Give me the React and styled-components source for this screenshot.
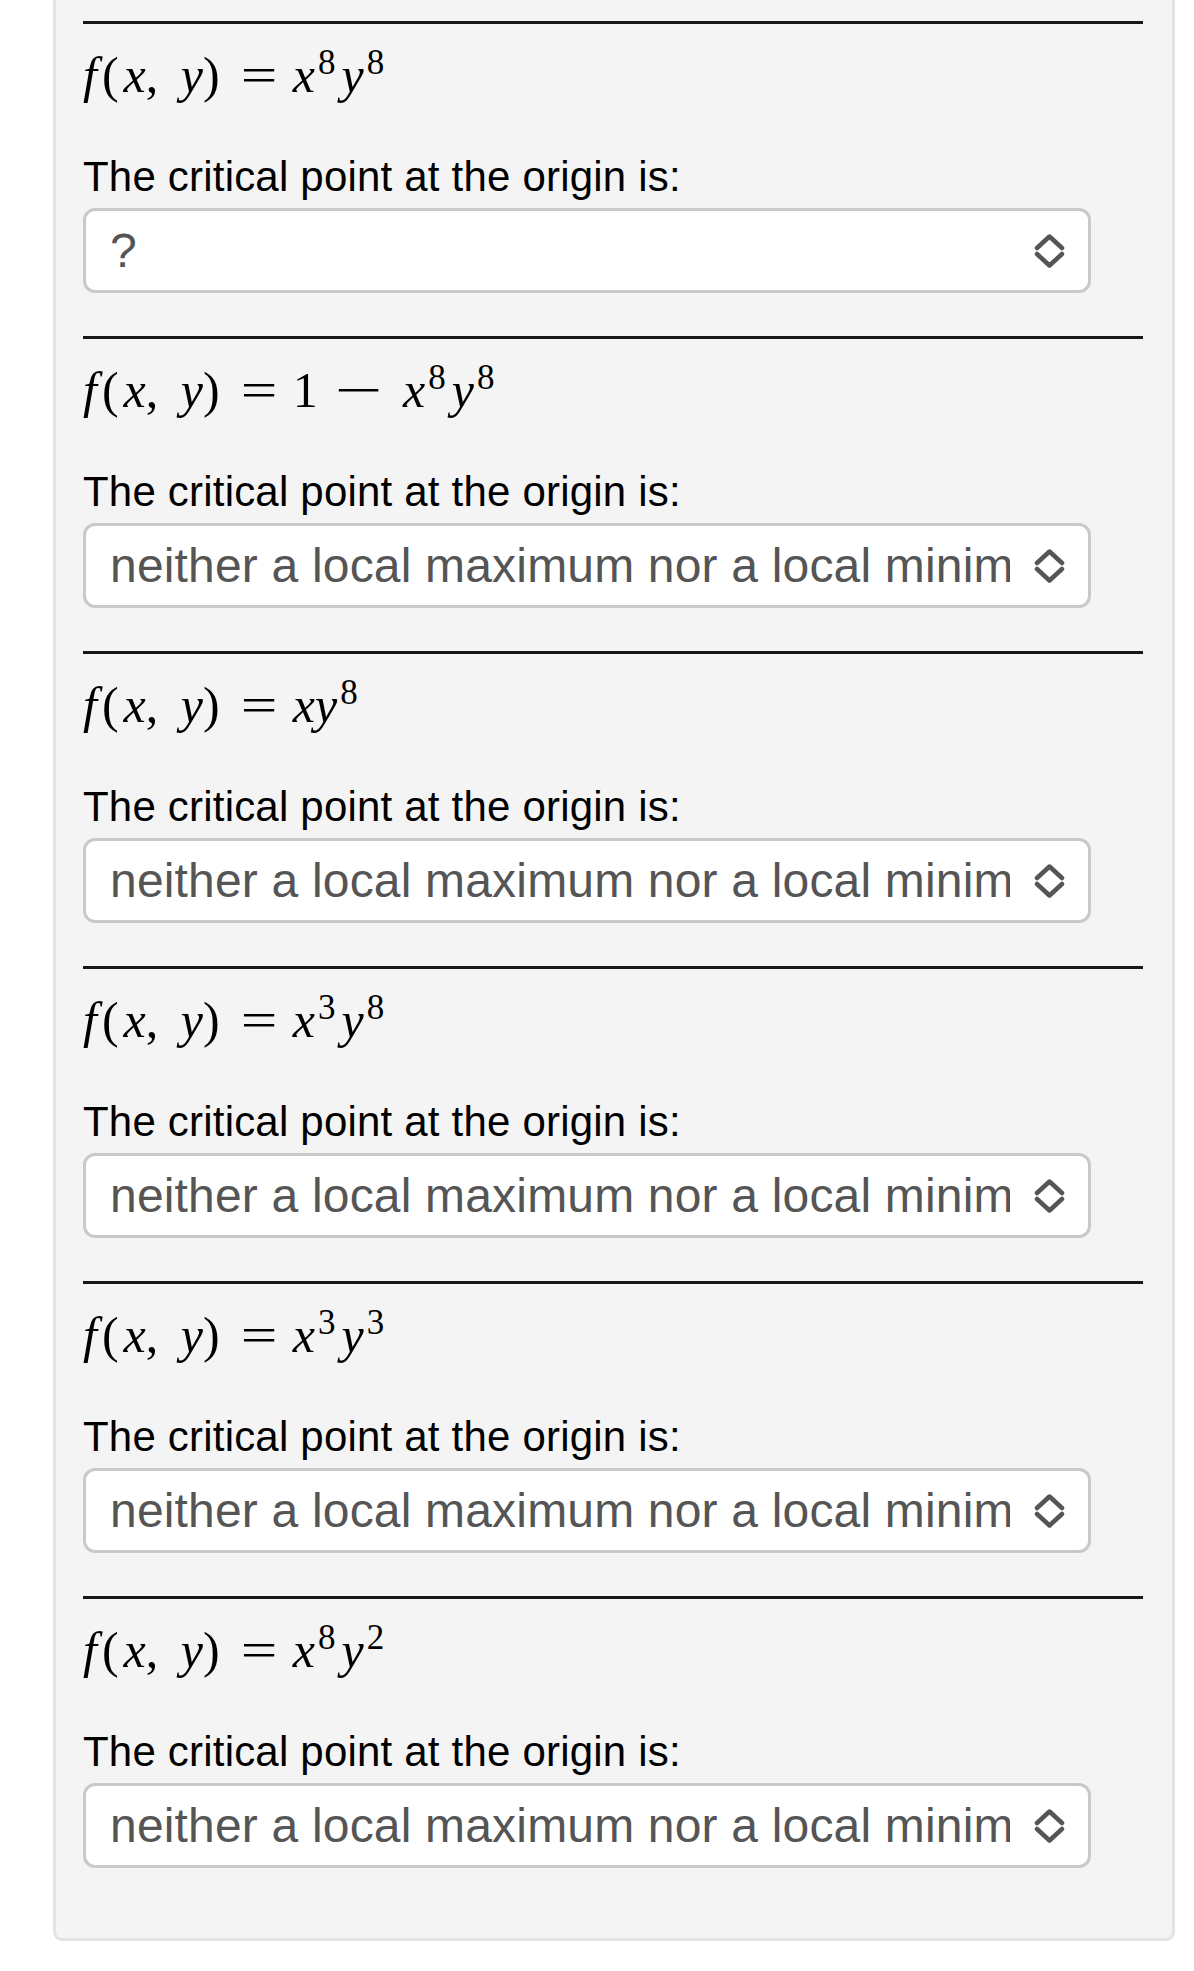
import React from "react";
import styled, { createGlobalStyle } from "styled-components";

const GlobalStyle = createGlobalStyle`
  body {
    margin: 0;
    background: #fff;
  }
`;

const Page = styled.div`
  padding: 0 19px 0 53px;
`;

const Panel = styled.div`
  background: #f4f4f4;
  border: 3px solid #e3e3e3;
  border-top: none;
  border-radius: 0 0 9px 9px;
  padding: 21px 29px 70px 27px;
  display: flex;
  flex-direction: column;
  gap: 43px;
`;

const Item = styled.section`
  display: flex;
  flex-direction: column;
`;

const Rule = styled.hr`
  margin: 0;
  height: 3px;
  border: none;
  background: #171717;
`;

const Formula = styled.div`
  margin-top: 23px;
  font-family: "Liberation Serif", "Times New Roman", serif;
  font-size: 50px;
  line-height: 56px;
  color: #000;
  white-space: nowrap;
`;

const Var = styled.span`
  font-style: italic;
  letter-spacing: ${(p) => (p.$wide ? "5px" : "0")};
`;

const Punct = styled.span`
  letter-spacing: 5px;
`;

const Op = styled.span`
  display: inline-block;
  margin: 0 ${(p) => p.$right ?? 20}px 0 ${(p) => p.$left ?? 20}px;
  transform: scaleX(${(p) => p.$stretch || 1});
`;

const Sup = styled.sup`
  font-style: normal;
  font-size: 0.7em;
  line-height: 0;
  vertical-align: 18px;
  margin: 0 6px 0 3px;
`;

const Prompt = styled.div`
  margin-top: 50px;
  font-family: "Liberation Sans", Arial, sans-serif;
  font-size: 42px;
  line-height: 48px;
  letter-spacing: 0.2px;
  color: #000;
`;

const Select = styled.div`
  margin-top: 7px;
  width: 95.1%;
  height: 85px;
  box-sizing: border-box;
  border: 3px solid #c9c9c9;
  border-radius: 12px;
  background: #fff;
  display: flex;
  align-items: center;
  gap: 24px;
  padding: 0 23px 0 24px;
`;

const Value = styled.span`
  flex: 1;
  overflow: hidden;
  white-space: nowrap;
  font-family: "Liberation Sans", Arial, sans-serif;
  font-size: 48px;
  line-height: 54px;
  letter-spacing: 0.18px;
  color: #555;
`;

const Chevrons = () => (
  <svg width="31" height="36" viewBox="0 0 31 36" fill="none">
    <path
      d="M3 15 L15.5 3.5 L28 15 M3 21 L15.5 32.5 L28 21"
      stroke="#555"
      strokeWidth="4.5"
      strokeLinecap="round"
      strokeLinejoin="round"
    />
  </svg>
);

const Lhs = () => (
  <>
    <Var $wide>f</Var>
    <Punct>(</Punct>
    <Var>x</Var>
    <Punct>, </Punct>
    <Var>y</Var>
    <Punct>)</Punct>
    <Op $stretch={1.3}>=</Op>
  </>
);

const Power = ({ base, exp }) => (
  <>
    <Var>{base}</Var>
    {exp && <Sup>{exp}</Sup>}
  </>
);

const answer = "neither a local maximum nor a local minimum";

const items = [
  { terms: [["x", "8"], ["y", "8"]], value: "?" },
  { lead: true, terms: [["x", "8"], ["y", "8"]], value: answer },
  { terms: [["x", null], ["y", "8"]], value: answer },
  { terms: [["x", "3"], ["y", "8"]], value: answer },
  { terms: [["x", "3"], ["y", "3"]], value: answer },
  { terms: [["x", "8"], ["y", "2"]], value: answer },
];

export default function App() {
  return (
    <Page>
      <GlobalStyle />
      <Panel>
        {items.map((item, i) => (
          <Item key={i}>
            <Rule />
            <Formula>
              <Lhs />
              {item.lead && (
                <>
                  1
                  <Op $left={26} $right={31} $stretch={1.7}>
                    −
                  </Op>
                </>
              )}
              {item.terms.map(([b, e], j) => (
                <Power key={j} base={b} exp={e} />
              ))}
            </Formula>
            <Prompt>The critical point at the origin is:</Prompt>
            <Select>
              <Value>{item.value}</Value>
              <Chevrons />
            </Select>
          </Item>
        ))}
      </Panel>
    </Page>
  );
}
